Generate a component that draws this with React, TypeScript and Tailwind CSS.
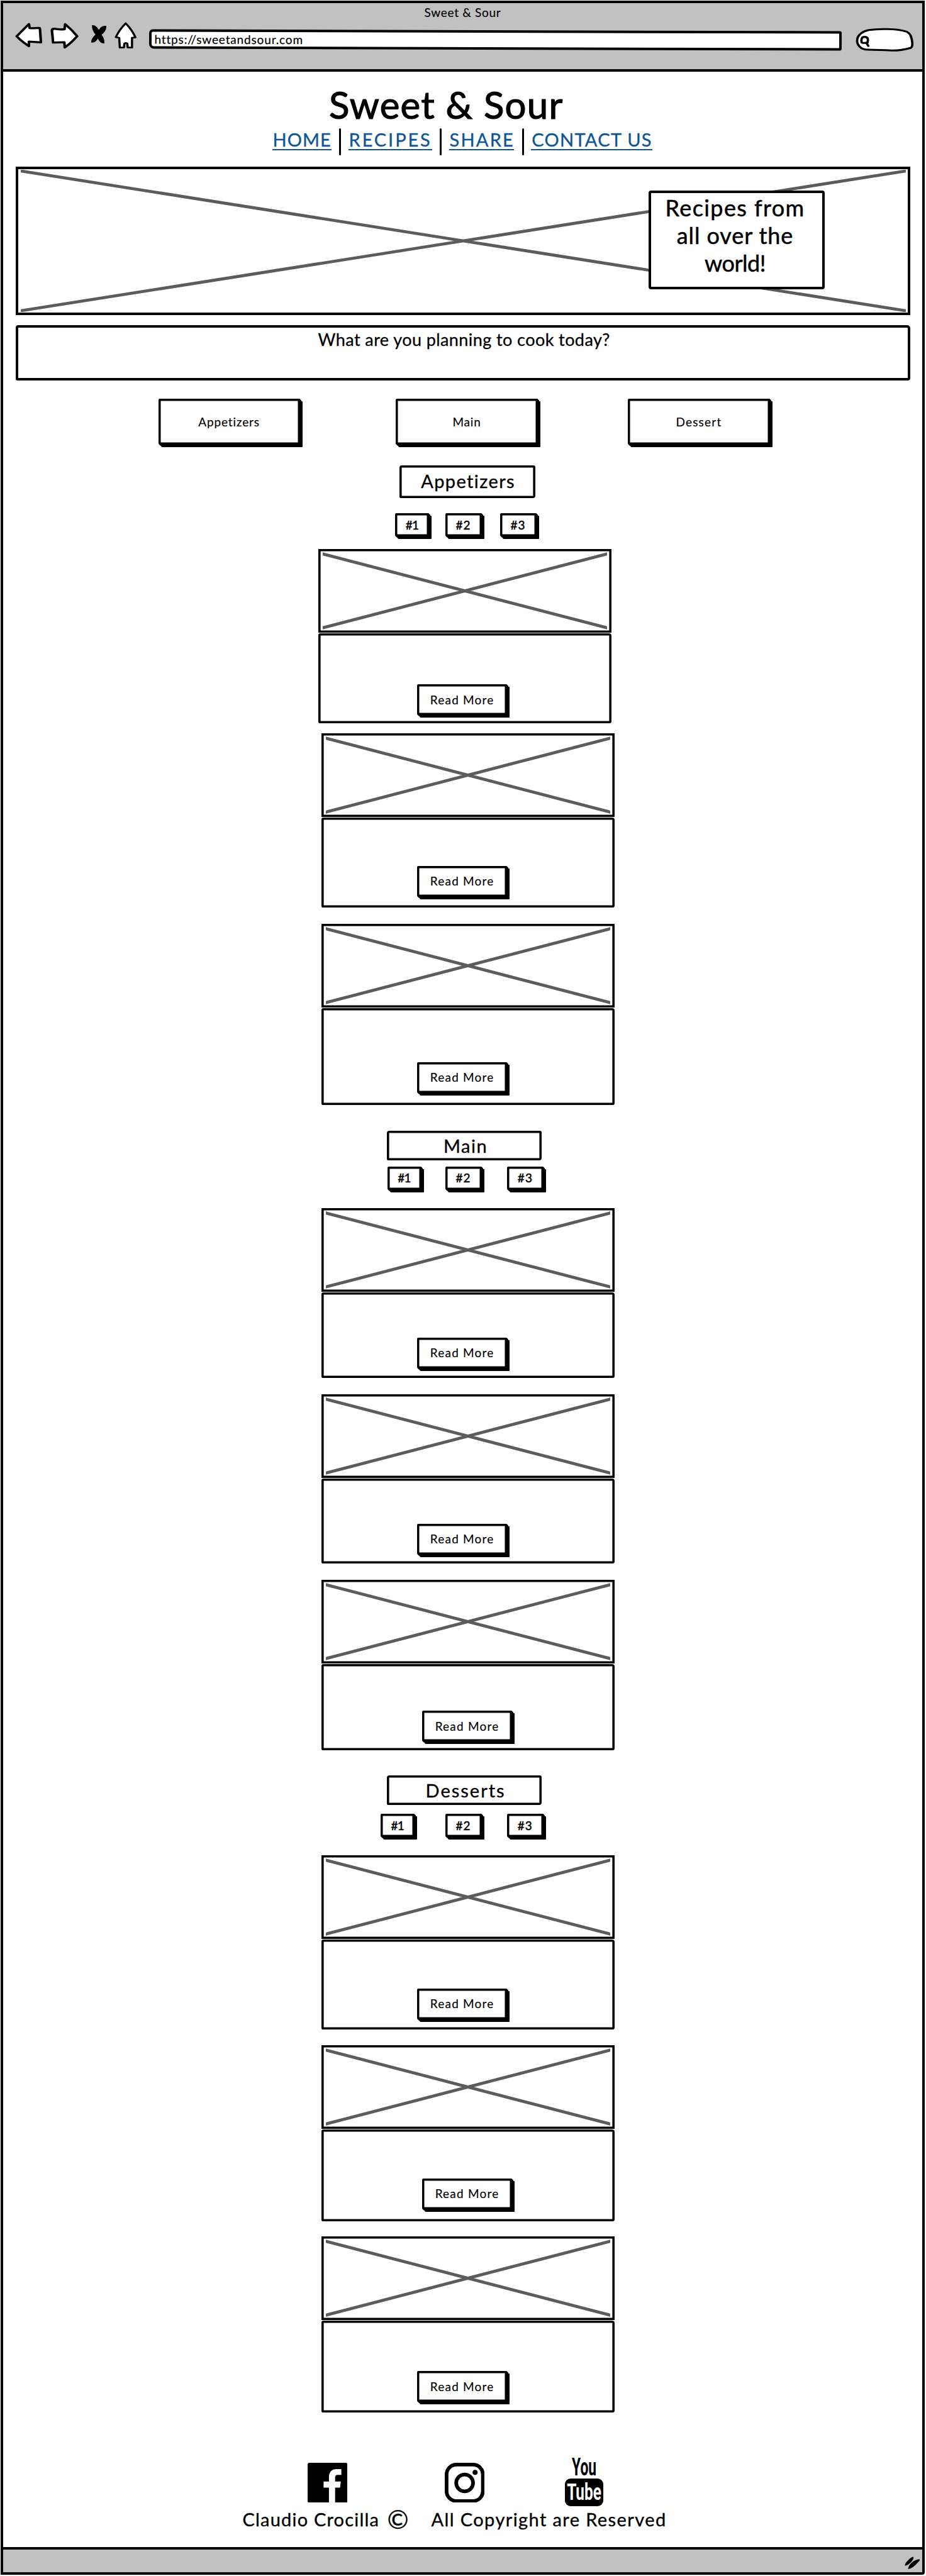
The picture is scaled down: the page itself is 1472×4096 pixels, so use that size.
import type { ReactNode } from "react";

function Cross({ width, height, className }: { width: number; height: number; className: string }) {
  return (
    <svg className={className} viewBox={`0 0 ${width} ${height}`} preserveAspectRatio="none" fill="none" stroke="#5c5c5c" strokeWidth="4.8">
      <path d={`M-8 0.6L${width + 8} ${height - 0.6}M-8 ${height - 0.6}L${width + 8} 0.6`} />
    </svg>
  );
}

function BackIcon() {
  return (
    <svg className="mt-[4px] h-[39.4px] w-[43.3px]" viewBox="76 141 138 154" preserveAspectRatio="none" fill="#fff" stroke="#000" strokeWidth="13" strokeLinejoin="round">
      <path d="M84 226L146 150L150 175Q176 177 196 174Q202 174 202 181L207 264L146 259V287Q122 268 104 249Z" />
    </svg>
  );
}

function ForwardIcon() {
  return (
    <svg className="ml-[13.1px] mt-[4px] h-[41.7px] w-[45.5px]" viewBox="256 141 145 163" preserveAspectRatio="none" fill="#fff" stroke="#000" strokeWidth="13" strokeLinejoin="round">
      <path d="M264 192Q264 179 275 179Q300 185 328 182L331 150Q364 184 392 225Q362 267 329 295L327 263L270 265Q268 230 264 192Z" />
    </svg>
  );
}

function StopIcon() {
  return (
    <svg className="ml-[17.9px] mt-[7px] h-[30.5px] w-[25.7px]" viewBox="458 153 82 119" preserveAspectRatio="none">
      <path d="M465 157Q485 153 500 186Q514 157 538 162Q540 190 514 216Q530 240 528 270Q508 274 495 240Q482 270 461 264Q460 240 483 215Q464 190 465 157Z" />
    </svg>
  );
}

function HomeIcon() {
  return (
    <svg className="ml-[12.5px] mt-[2.8px] h-[42.5px] w-[35.4px]" viewBox="580 136 113 166" preserveAspectRatio="none" fill="#fff" stroke="#000" strokeWidth="11" strokeLinejoin="round">
      <path d="M637 144Q670 185 686 231L669 234V295L647 294L645 270Q638 264 630 270L628 294L607 295L604 234L587 230Q606 180 637 144Z" />
    </svg>
  );
}

function SearchPill() {
  return (
    <svg className="ml-[21.1px] mt-[10.5px] h-[40.4px] w-[94.7px]" viewBox="1208 166 302 158" preserveAspectRatio="none" fill="#fff" stroke="#000" strokeWidth="12" strokeLinecap="round" strokeLinejoin="round">
      <path d="M1276 307C1235 307 1219 275 1219 250C1221 212 1250 192 1278 185C1330 175 1420 176 1462 192C1490 200 1496 230 1499 265Q1500 292 1490 296Q1440 313 1395 312Q1330 308 1276 307Z" />
      <path d="M1242 262C1239 240 1242 227 1258 227C1275 228 1276 245 1272 262Q1256 268 1242 262ZM1266 264L1276 284" />
    </svg>
  );
}

function Btn({ className, children }: { className: string; children: ReactNode }) {
  return (
    <button className={`flex shrink-0 items-center justify-center rounded-[2px_1px_1px_2px] border-[3px] border-black bg-white text-[19px] leading-[24px] shadow-[inset_0_0_0_0.5px_#000,1px_1px_0_#000,2px_2px_0_#000,4px_4px_0_#000] ${className}`}>
      {children}
    </button>
  );
}

function SectionTitle({ className, children }: { className: string; children: ReactNode }) {
  return (
    <h2 className={`flex items-center justify-center rounded-[4px_3px_4px_2px] border-[3px] border-black text-[29px] leading-[36px] shadow-[inset_0_0_0_0.6px_#000] [-webkit-text-stroke:0.35px_#000] ${className}`}>
      {children}
    </h2>
  );
}

function Numbers({ className, first, second, third }: { className: string; first: string; second: string; third: string }) {
  return (
    <div className={`flex h-[37px] ${className}`}>
      <Btn className={`h-[37px] w-[54px] tracking-[-0.8px] [-webkit-text-stroke:0.5px_#000] ${first}`}>#1</Btn>
      <Btn className={`h-[37px] w-[58px] tracking-[1px] [-webkit-text-stroke:0.5px_#000] ${second}`}>#2</Btn>
      <Btn className={`h-[37px] w-[58px] tracking-[1px] [-webkit-text-stroke:0.5px_#000] ${third}`}>#3</Btn>
    </div>
  );
}

function Card({ className, button }: { className: string; button: string }) {
  return (
    <article className={`flex w-[466px] flex-col ${className}`}>
      <div className="h-[133px] shrink-0 border-[3px] border-black px-[4px] py-[2px] shadow-[inset_0_0_0_0.6px_#000]">
        <Cross width={452} height={123} className="block h-[123px] w-[452px]" />
      </div>
      <div className="mt-[1px] flex-1 rounded-[3px_4px_3px_2px] border-[3px] border-black shadow-[inset_0_0_0_0.6px_#000]">
        <Btn className={`h-[49px] w-[143px] tracking-[1.2px] [-webkit-text-stroke:0.15px_#000] ${button}`}>Read More</Btn>
      </div>
    </article>
  );
}

function NavLink({ className, children }: { className: string; children: ReactNode }) {
  return (
    <a href="#" className={`block h-[35.5px] whitespace-nowrap border-b-2 border-[#0f5596] text-[29px] leading-[36px] text-[#0f5596] [-webkit-text-stroke:0.35px_#0f5596] ${className}`}>
      {children}
    </a>
  );
}

function Divider() {
  return <span className="ml-[12.6px] mr-[11.4px] h-[43px] w-[3px] shrink-0 rounded-full bg-black" />;
}

export default function App() {
  return (
    <div className="h-[4096px] w-[1472px] overflow-hidden bg-white pl-px pt-px font-['Lato',sans-serif] text-black">
      <div className="flex h-[4093px] w-[1469px] flex-col rounded-br-[4px] border-4 border-black">
        <header className="h-[109px] shrink-0 border-b-4 border-black bg-[#c1c1c1]">
          <div className="mt-[3px] text-center text-[19px] leading-[24px] tracking-[0.7px] [-webkit-text-stroke:0.15px_#000]">Sweet &amp; Sour</div>
          <div className="flex items-start pl-[18.8px]">
            <BackIcon />
            <ForwardIcon />
            <StopIcon />
            <HomeIcon />
            <div className="ml-[19.4px] mt-[16px] h-[31px] w-[1101px] rotate-[0.16deg] rounded-[6px_3px_3px_8px] border-4 border-black bg-white pl-[4.5px] text-[19px] leading-[23px] tracking-[0.85px] [-webkit-text-stroke:0.2px_#000]">
              https://sweetandsour.com
            </div>
            <SearchPill />
          </div>
        </header>

        <main className="flex-1">
          <h1 className="pl-[518px] pt-[21.5px] text-[60px] leading-[60px] tracking-[1.2px] [-webkit-text-stroke:1.2px_#000]">Sweet &amp; Sour</h1>
          <nav className="mt-[8px] flex h-[43px] pl-[427.6px]">
            <NavLink className="w-[94px] pl-[1px] tracking-[1px]">HOME</NavLink>
            <Divider />
            <NavLink className="w-[133px] pl-[1px] tracking-[2.9px]">RECIPES</NavLink>
            <Divider />
            <NavLink className="w-[103.7px] pl-[1px] tracking-[2.2px]">SHARE</NavLink>
            <Divider />
            <NavLink className="w-[192.5px] pl-[1px] tracking-[1.3px]">CONTACT US</NavLink>
          </nav>

          <section className="relative ml-[20px] mt-[18.5px] h-[236px] w-[1422px] border-4 border-black px-[3.5px] py-[1px]">
            <Cross width={1407} height={226} className="block h-[226px] w-[1407px]" />
            <p className="absolute left-[1002px] top-[34px] h-[157px] w-[280px] rounded-[4px] border-4 border-black bg-white pr-[5px] pt-[1px] text-center text-[36px] leading-[44.2px] [-webkit-text-stroke:0.5px_#000]">
              <span className="tracking-[1.4px]">Recipes from</span>
              <br />
              <span className="tracking-[0.9px]">all over the</span>
              <br />
              <span className="tracking-[-0.5px]">world!</span>
            </p>
          </section>

          <section className="ml-[20px] mt-[16px] h-[88px] w-[1422px] rounded-[4px_5px_4px_3px] border-4 border-black pl-[476.5px] pt-[3px] text-[27px] leading-[32px] tracking-[0.42px] [-webkit-text-stroke:0.3px_#000]">
            What are you planning to cook today?
          </section>

          <div className="mt-[29px] flex pl-[246.6px] [-webkit-text-stroke:0.15px_#000]">
            <Btn className="h-[73px] w-[225px] pt-[1px] tracking-[0.85px]">Appetizers</Btn>
            <Btn className="ml-[152.7px] h-[73px] w-[225.5px] pt-[1px] tracking-[0.8px]">Main</Btn>
            <Btn className="ml-[143.4px] h-[73px] w-[225.5px] pt-[1px] tracking-[1.2px]">Dessert</Btn>
          </div>

          <SectionTitle className="ml-[629.6px] mt-[32.6px] h-[52px] w-[216px] pb-[1px] pl-[3px] tracking-[1.4px]">Appetizers</SectionTitle>
          <Numbers className="mt-[24.7px]" first="ml-[622.9px]" second="ml-[25.7px]" third="ml-[29px]" />
          <Card className="ml-[500.9px] mt-[20px] h-[276.5px]" button="ml-[154.3px] mt-[77.9px]" />
          <Card className="ml-[505.5px] mt-[16.4px] h-[277px]" button="ml-[149.7px] mt-[73.6px]" />
          <Card className="ml-[505.5px] mt-[25.5px] h-[288.2px]" button="ml-[149.7px] mt-[83.1px]" />

          <SectionTitle className="ml-[609.9px] mt-[41px] h-[47px] w-[246.5px] pl-[4px] pt-[1px] tracking-[1.5px]">Main</SectionTitle>
          <Numbers className="mt-[9.9px]" first="ml-[610.6px]" second="ml-[38px]" third="ml-[40.3px]" />
          <Card className="ml-[505.5px] mt-[28.8px] h-[270.5px]" button="ml-[149.7px] mt-[69.3px]" />
          <Card className="ml-[505.5px] mt-[25.9px] h-[269.4px]" button="ml-[149.7px] mt-[68.9px]" />
          <Card className="ml-[505.5px] mt-[25.5px] h-[270.7px]" button="ml-[157.5px] mt-[71.3px]" />

          <SectionTitle className="ml-[609.9px] mt-[40px] h-[47px] w-[246.5px] pl-[4px] pt-[2px] tracking-[2px]">Desserts</SectionTitle>
          <Numbers className="mt-[14.7px]" first="ml-[599.7px]" second="ml-[48.9px]" third="ml-[40.3px]" />
          <Card className="ml-[505.5px] mt-[28.6px] h-[277.6px]" button="ml-[149.7px] mt-[74.9px]" />
          <Card className="ml-[505.5px] mt-[24.9px] h-[279.4px]" button="ml-[157.5px] mt-[74.6px]" />
          <Card className="ml-[505.5px] mt-[24.7px] h-[279.3px]" button="ml-[149.7px] mt-[77px]" />

          <div className="mt-[74.7px] flex h-[74.3px] items-center pl-[483.6px]">
            <svg className="h-[63.7px] w-[63.5px]" viewBox="0 0 63.5 63.7">
              <rect width="63.5" height="63.7" rx="3" />
              <path fill="#fff" d="M33.9 64V39.4H25.4V29.7H33.9V23C33.9 14 39 10 46 10H53.6V19.2H48.5C44.5 19.2 43.7 21 43.7 24V29.7H52.7L51.6 39.4H43.7V64Z" />
            </svg>
            <svg className="ml-[154.7px] h-[63.7px] w-[63.5px]" viewBox="0 0 63.5 63.7" fill="none" stroke="#000" strokeWidth="5.8">
              <rect x="2.9" y="2.9" width="57.7" height="57.9" rx="15.5" />
              <circle cx="31.6" cy="32" r="13.4" />
              <circle cx="48.2" cy="15.2" r="4" fill="#000" stroke="none" />
            </svg>
            <div className="ml-[127.4px] flex h-[74.3px] w-[61.6px] flex-col items-center font-['Roboto',sans-serif] font-bold">
              <span className="block h-[31px] scale-x-[0.6] text-[38px] leading-[27px]">You</span>
              <span className="flex h-[43.3px] w-[61.6px] items-center justify-center rounded-[9px] bg-black text-white">
                <span className="block scale-x-[0.66] text-[37px] leading-[43px]">Tube</span>
              </span>
            </div>
          </div>
          <div className="mt-[3px] flex h-[36px] whitespace-nowrap pl-[380.5px] text-[29px] leading-[36px] [-webkit-text-stroke:0.35px_#000]">
            <span className="w-[230px] tracking-[1.2px]">Claudio Crocilla</span>
            <span className="w-[70px] text-[41px] [-webkit-text-stroke:0.3px_#000]">©</span>
            <span className="tracking-[1.4px]">All Copyright are Reserved</span>
          </div>
        </main>

        <footer className="flex h-[40px] shrink-0 items-start justify-end border-t-4 border-black bg-[#c1c1c1] pr-[2px] pt-[10px]">
          <svg className="h-[22.5px] w-[26.9px]" viewBox="825 300 105 88" preserveAspectRatio="none">
            <path d="M831 362Q830 345 850 328Q868 308 882 306Q890 312 876 330Q855 358 831 362ZM851 382Q850 365 870 345Q895 322 922 321Q928 326 910 342Q880 378 851 382Z" />
          </svg>
        </footer>
      </div>
    </div>
  );
}
